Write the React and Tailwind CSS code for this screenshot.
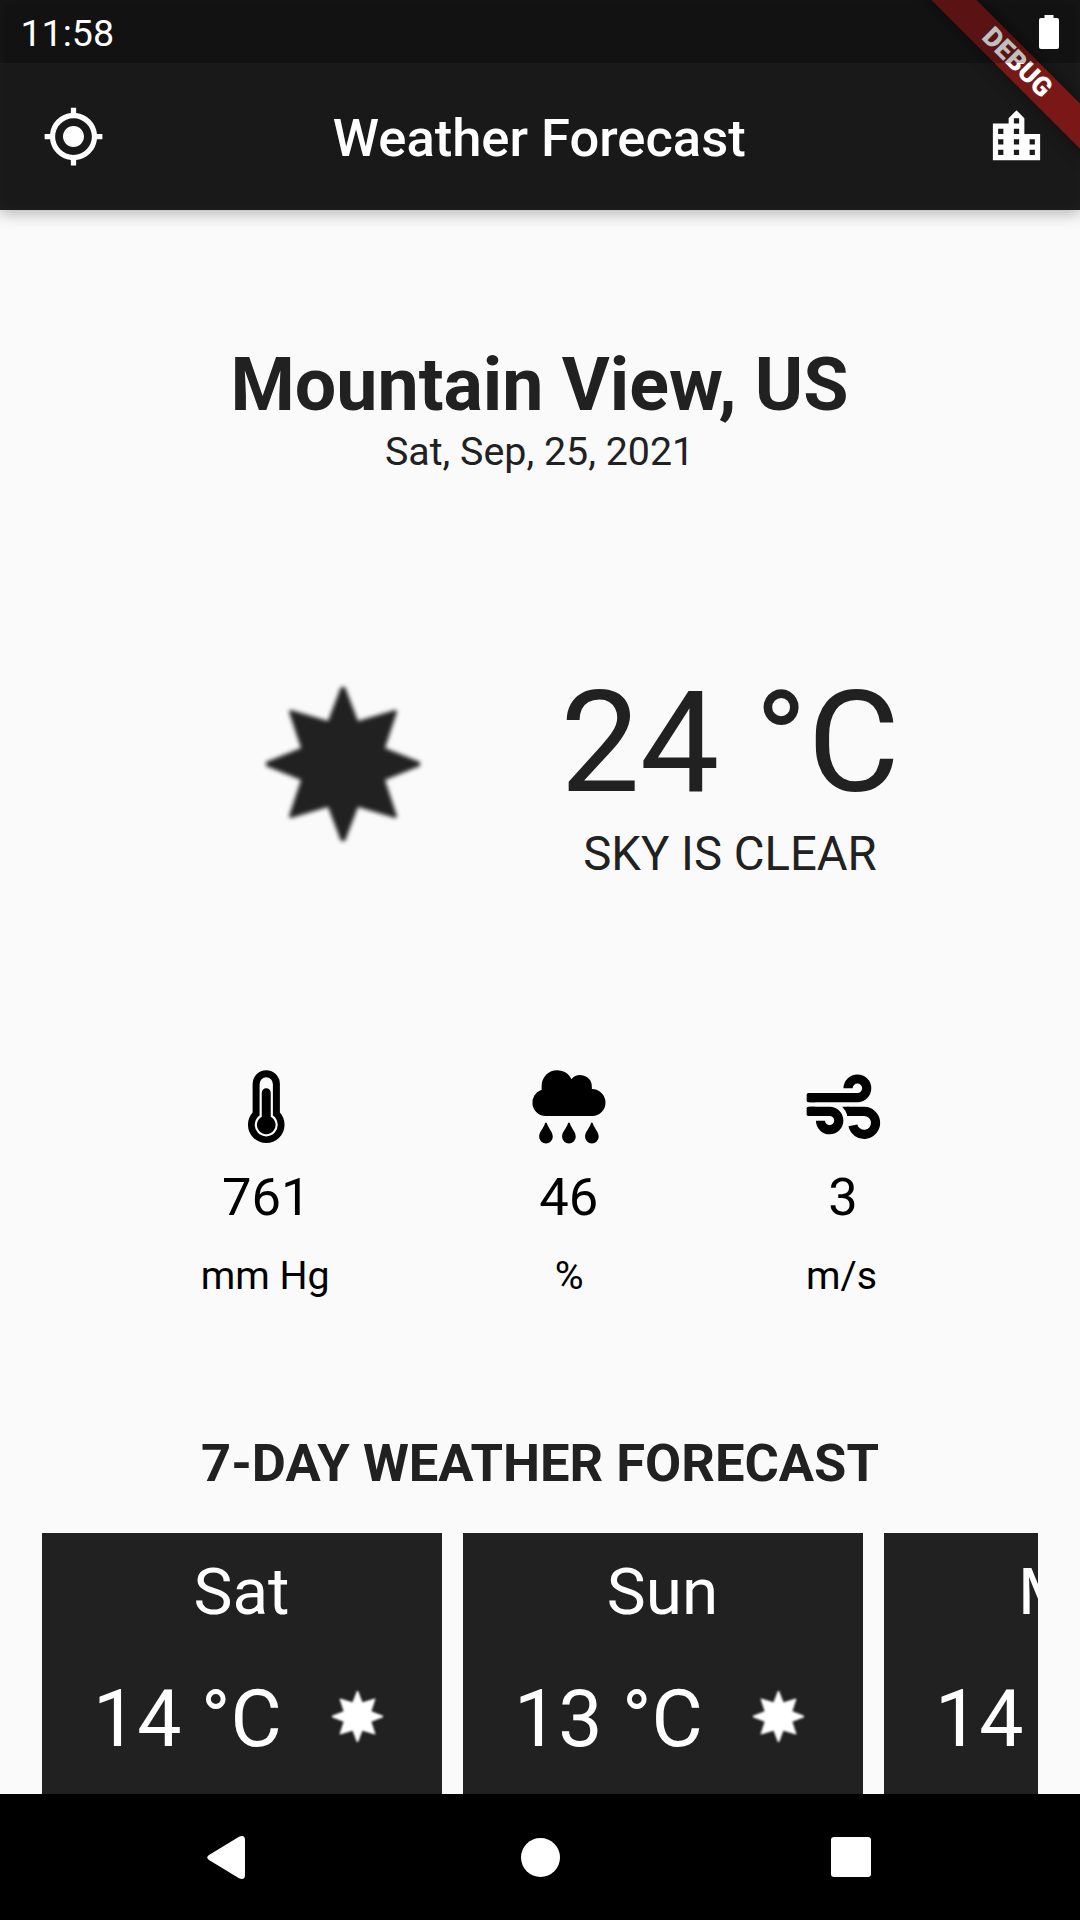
import { MdMyLocation, MdLocationCity } from "react-icons/md";

function Star({ className }) {
  return (
    <svg viewBox="-80 -80 160 160" className={className} fill="currentColor">
      <path d="M-2-77H2L15-43 52-54Q54-54 54-52L42-16 77-2V2L42 16 54 52Q54 54 52 54L15 43 2 77H-2L-15 43-52 54Q-54 54-54 52L-42 16-77 2V-2L-42-16-54-52Q-54-54-52-54L-15-43Z" />
    </svg>
  );
}

function Thermometer() {
  return (
    <svg viewBox="147 59 221 221" className="h-[73.5px] w-[73.5px] overflow-visible">
      <path
        fill="currentColor"
        d="M218 101a41 41 0 0 1 82 0v86a55 55 0 1 1-82 0Z"
      />
      <path
        fill="#fafafa"
        d="M239 101a20 20 0 0 1 40 0v95a34.500 34.500 0 1 1-40 0Z"
      />
      <path
        fill="currentColor"
        d="M245.500 127.500a13.500 13.500 0 0 1 27 0v72a28 28 0 1 1-27 0Z"
      />
    </svg>
  );
}

function RainCloud() {
  return (
    <svg viewBox="33 28.5 221 221" className="h-[73.5px] w-[73.5px] overflow-visible" fill="currentColor">
      <path d="M77 167a40.500 40.500 0 0 1-12-79V76a47 47 0 0 1 89.500-20A35 35 0 0 1 216 77v9a40.500 40.500 0 0 1 1 81Z" />
      <path d="M75 189q3-5 6 0c5 16 17.500 24 17.500 40a20.500 20.500 0 0 1-41 0c0-16 12.500-24 17.500-40Z" />
      <path d="M144 189q3-5 6 0c5 16 17.500 24 17.500 40a20.500 20.500 0 0 1-41 0c0-16 12.500-24 17.500-40Z" />
      <path d="M213 189q3-5 6 0c5 16 17.500 24 17.500 40a20.500 20.500 0 0 1-41 0c0-16 12.500-24 17.500-40Z" />
    </svg>
  );
}

function Wind() {
  return (
    <svg viewBox="28 29 221 221" className="h-[73.5px] w-[73.5px] overflow-visible" fill="none" stroke="currentColor" strokeWidth="27.5">
      <path d="M40 112h142a28 28 0 1 0-27.500-28" />
      <path d="M40 153.500h59a27.500 27.500 0 1 1-27.500 28" />
      <path d="M152 153.500h50a34.500 34.500 0 1 1-33 42" />
      <path d="M137 139.750h20v27.500h-4q-5-16-16-27.500Z" fill="currentColor" stroke="none" />
      <rect x="30" y="98.250" width="30" height="27.500" rx="5" fill="currentColor" stroke="none" />
      <rect x="30" y="139.750" width="30" height="27.500" rx="5" fill="currentColor" stroke="none" />
    </svg>
  );
}

const details = [
  { Icon: Thermometer, value: "761", unit: "mm Hg", nudge: "pr-px" },
  { Icon: RainCloud, value: "46", unit: "%", nudge: "pl-[2px]" },
  { Icon: Wind, value: "3", unit: "m/s", nudge: "pr-[2px]" },
];

const days = [
  { name: "Sat", temp: "14 °C" },
  { name: "Sun", temp: "13 °C" },
  { name: "Mon", temp: "14 °C" },
];

function Header() {
  return (
    <header className="relative z-10 flex h-[210px] shrink-0 flex-col bg-[#191919] text-white shadow-[0_4px_14px_rgba(0,0,0,0.27),inset_0_0_14px_rgba(255,255,255,0.03)]">
      <div className="relative z-20 flex h-[63px] items-center justify-between bg-black/25 pl-[20.500px] pr-[21px]">
        <span className="pt-[2px] text-[37.600px] leading-[44px]">11:58</span>
        <svg viewBox="0 0 20 34" className="h-[34px] w-[20px]" fill="currentColor">
          <path d="M5.500 0h9v3H18a2 2 0 0 1 2 2v27a2 2 0 0 1-2 2H2a2 2 0 0 1-2-2V5a2 2 0 0 1 2-2h3.500Z" />
        </svg>
      </div>
      <div className="flex flex-1 items-center justify-between pl-[42px] pr-[31.500px]">
        <MdMyLocation className="size-[63px]" />
        <h1 className="pr-[12px] pt-[3px] text-[52.500px] font-medium leading-[62px]">Weather Forecast</h1>
        <MdLocationCity className="size-[63px]" />
      </div>
      <div className="absolute right-0 top-0 z-10 h-[210px] w-[210px] overflow-hidden">
        <div className="absolute left-[-22.800px] top-[47.100px] flex h-[31.500px] w-[340px] rotate-45 justify-center bg-[#7a1818] text-[26.800px] font-black leading-[30px] shadow-[0_0_16px_rgba(0,0,0,0.5)]">
          DEBUG
        </div>
      </div>
    </header>
  );
}

function DayCard({ name, temp }) {
  return (
    <div className="h-[300px] w-[400px] shrink-0 bg-[#212121] pt-[21px] text-white">
      <div className="pr-px text-center text-[65.625px] leading-[76px]">{name}</div>
      <div className="mt-[43px] flex items-center pl-[51px]">
        <span className="w-[188.700px] whitespace-nowrap text-[78.750px] leading-[92px]">{temp}</span>
        <Star className="mb-[6px] ml-[49px] size-[53px] blur-[0.8px]" />
      </div>
    </div>
  );
}

export default function App() {
  return (
    <div className="flex h-[1920px] w-[1080px] flex-col overflow-hidden bg-[#fafafa] font-['Roboto',sans-serif] text-[#212121]">
      <Header />
      <main className="flex h-[1584px] shrink-0 flex-col overflow-hidden pt-[132px]">
        <h2 className="pr-px text-center text-[73.500px] font-bold leading-[86px]">Mountain View, US</h2>
        <p className="mt-px pr-px text-center text-[39.375px] leading-[46px]">Sat, Sep, 25, 2021</p>

        <section className="mt-[185px] flex pl-[263.300px]">
          <Star className="mt-[24px] size-[160px] blur-[2px]" />
          <div className="ml-[136.700px] w-[340px] text-center">
            <div className="text-[141.750px] leading-[166px]">24 °C</div>
            <div className="text-[47.250px] leading-[56px]">SKY IS CLEAR</div>
          </div>
        </section>

        <section className="mt-[187.500px] flex justify-evenly text-black">
          {details.map(({ Icon, value, unit, nudge }) => (
            <div key={unit} className="flex flex-col items-center">
              <Icon />
              <span className="mt-[23px] text-[52.500px] leading-[62px] nth-2:pl-px">{value}</span>
              <span className={`mt-[24.500px] text-[39.375px] leading-[46px] ${nudge}`}>{unit}</span>
            </div>
          ))}
        </section>

        <h3 className="mt-[133.500px] text-center text-[52.500px] font-bold leading-[62px]">7-DAY WEATHER FORECAST</h3>
        <section className="mx-[42px] mt-[39px] flex gap-[21px] overflow-hidden">
          {days.map((day) => (
            <DayCard key={day.name} {...day} />
          ))}
        </section>
      </main>
      <nav className="flex h-[126px] shrink-0 items-center bg-black pl-[206.500px] text-white">
        <svg viewBox="0 0 38 43" className="h-[43px] w-[38px]" fill="currentColor">
          <path d="M2 19 32 .8Q38-1.500 38 4v35q0 5.500-6 3.200L2 24Q-1.500 21.500 2 19Z" />
        </svg>
        <div className="ml-[276px] size-[39px] rounded-full bg-white" />
        <div className="ml-[271.500px] size-[40px] rounded-[3px] bg-white" />
      </nav>
    </div>
  );
}
